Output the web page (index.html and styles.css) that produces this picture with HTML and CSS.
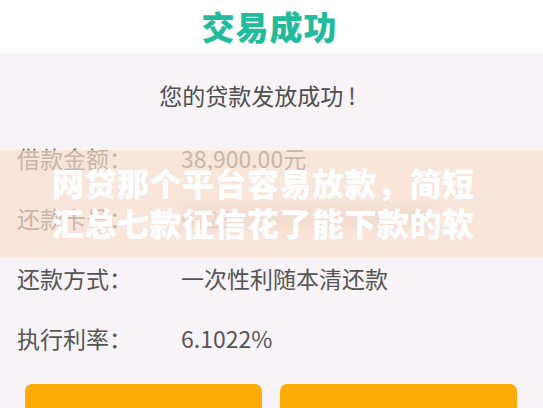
FILE: index.html
```html
<!DOCTYPE html>
<html lang="zh-CN">
<head>
<meta charset="utf-8">
<title>交易成功</title>
<link rel="stylesheet" href="styles.css">
</head>
<body>
<div class="page">
  <header class="header"><h1 class="title">交易成功</h1></header>
  <div class="message">您的贷款发放成功 !</div>
  <div class="rows">
    <div class="row"><span class="label">借款金额：</span><span class="value">38,900.00元</span></div>
    <div class="row"><span class="label">还款卡号：</span><span class="value card"><span class="card-num">6228</span><span class="mask"></span></span></div>
    <div class="row"><span class="label">还款方式：</span><span class="value">一次性利随本清还款</span></div>
    <div class="row"><span class="label">执行利率：</span><span class="value">6.1022%</span></div>
  </div>
  <div class="buttons">
    <button class="btn">还款计划</button>
    <button class="btn">我的贷款</button>
  </div>
  <div class="banner">
    <p class="banner-line">网贷那个平台容易放款，简短</p>
    <p class="banner-line">汇总七款征信花了能下款的软</p>
  </div>
</div>
</body>
</html>
```
FILE: styles.css
```css
html, body {
  margin: 0;
  padding: 0;
}
body {
  width: 543px;
  height: 408px;
  overflow: hidden;
  background: #f7f3f7;
  font-family: "Noto Sans CJK SC", "Noto Sans", sans-serif;
}
.page {
  position: relative;
  height: 408px;
  overflow: hidden;
}
.header {
  height: 53px;
  background: #ffffff;
  display: flex;
  align-items: center;
  justify-content: center;
}
.title {
  margin: 0;
  font-size: 33px;
  font-weight: 900;
  color: #22bb9c;
  line-height: 1;
  padding-right: 4px;
  letter-spacing: 1px;
}
.message {
  height: 66px;
  padding-top: 9px;
  display: flex;
  align-items: center;
  justify-content: center;
  padding-right: 28px;
  font-size: 23px;
  color: #4e4e4e;
}
.rows {
  display: flex;
  flex-direction: column;
}
.row {
  height: 60px;
  display: flex;
  align-items: center;
  padding-left: 17px;
  font-size: 23px;
  color: #555555;
}
.label {
  width: 164px;
  flex: none;
}
.value {
  display: flex;
  align-items: center;
}
.card {
  position: relative;
  width: 250px;
  height: 24px;
}
.card-num {
  color: #8a8a8a;
}
.mask {
  position: absolute;
  left: 0;
  top: 0;
  width: 250px;
  height: 24px;
  background: #d9ccc8;
  filter: blur(3px);
  opacity: 0.6;
}
.buttons {
  display: flex;
  gap: 18px;
  padding: 16px 26px 0 25px;
}
.btn {
  flex: 1;
  height: 52px;
  border: none;
  border-radius: 7px;
  background: #fdab06;
  color: #ffffff;
  font-family: inherit;
  font-size: 24px;
  padding-top: 18px;
}
.banner {
  position: absolute;
  left: 0;
  right: 0;
  top: 150px;
  height: 108px;
  box-sizing: border-box;
  padding: 12px 0 0 52px;
  background: rgba(250, 222, 204, 0.7);
}
.banner-line {
  margin: 0;
  font-size: 32px;
  line-height: 40px;
  font-weight: 900;
  letter-spacing: 0.5px;
  color: #ffffff;
  white-space: nowrap;
}
```
